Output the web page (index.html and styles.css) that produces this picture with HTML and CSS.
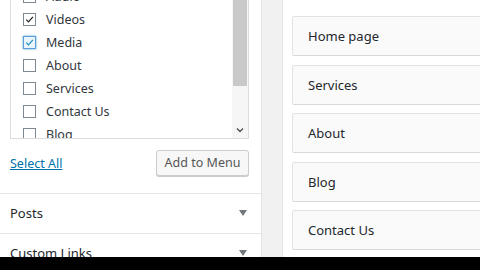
FILE: index.html
```html
<!DOCTYPE html>
<html lang="en">

<head>
    <meta charset="UTF-8">
    <meta name="viewport" content="width=device-width, initial-scale=1.0">
    <title>Menus</title>

    <link rel="stylesheet" href="styles.css">
</head>

<body>
    <div class="screen">
        <div class="sidePanel">
            <div class="listBox">
                <ul class="checkList">
                    <li><span class="box checked"><svg viewBox="0 0 12 12"><path d="M2.5 6.2l2.4 2.4 4.8-5.4" /></svg></span>Audio</li>
                    <li><span class="box checked"><svg viewBox="0 0 12 12"><path d="M2.5 6.2l2.4 2.4 4.8-5.4" /></svg></span>Videos</li>
                    <li><span class="box checked focus"><svg viewBox="0 0 12 12"><path d="M2.5 6.2l2.4 2.4 4.8-5.4" /></svg></span>Media</li>
                    <li><span class="box"></span>About</li>
                    <li><span class="box"></span>Services</li>
                    <li><span class="box"></span>Contact Us</li>
                    <li><span class="box"></span>Blog</li>
                </ul>
                <div class="scrollBar">
                    <div class="thumb"></div>
                    <div class="arrowDown"><svg viewBox="0 0 8 6"><path d="M1 1.5l3 3 3-3" /></svg></div>
                </div>
            </div>

            <div class="listActions">
                <a href="#" class="selectAll">Select All</a>
                <button class="addBtn">Add to Menu</button>
            </div>

            <div class="accordion">
                <div class="accTitle">Posts <span class="tri"></span></div>
                <div class="accTitle">Custom Links <span class="tri"></span></div>
            </div>
        </div>

        <div class="gutter"></div>

        <div class="menuPanel">
            <div class="menuItem">Home page</div>
            <div class="menuItem">Services</div>
            <div class="menuItem">About</div>
            <div class="menuItem">Blog</div>
            <div class="menuItem">Contact Us</div>
        </div>
    </div>

    <div class="blackBar"></div>
</body>

</html>
```

FILE: styles.css
```css
body {
    font-family: 'Noto Sans', 'Open Sans', sans-serif;
    background-color: #f1f1f1;
    color: #23282d;
    margin: 0;
    padding: 0;
    width: 480px;
    height: 270px;
    overflow: hidden;
}

.screen {
    display: flex;
    height: 257px;
    overflow: hidden;
}

.sidePanel {
    width: 262px;
    flex-shrink: 0;
    background-color: #fff;
    border-right: 1px solid #e5e5e5;
    box-sizing: border-box;
}

.listBox {
    display: flex;
    margin: 0 12px 0 10px;
    height: 139px;
    border: 1px solid #ddd;
    border-top: 0;
    box-sizing: border-box;
    overflow: hidden;
}

.checkList {
    list-style: none;
    margin: -15px 0 0 0;
    padding: 0 0 0 12px;
    flex: 1;
}

.checkList li {
    height: 23px;
    display: flex;
    align-items: center;
    font-size: 12.5px;
    color: #32373c;
}

.box {
    width: 11px;
    height: 11px;
    border: 1px solid #7e8993;
    margin-right: 10px;
    display: flex;
    align-items: center;
    justify-content: center;
    background: #fff;
}

.box svg {
    width: 11px;
    height: 11px;
    fill: none;
    stroke: #1e1e1e;
    stroke-width: 1.3;
}

.box.focus {
    border-color: #5b9dd9;
    box-shadow: 0 0 2px rgba(30, 140, 190, 0.8);
    background: #eaf4fb;
}

.box.focus svg {
    stroke: #1e8cbe;
}

.scrollBar {
    width: 16px;
    background-color: #f6f6f6;
    display: flex;
    flex-direction: column;
    justify-content: space-between;
}

.thumb {
    height: 86px;
    margin: 0 1px;
    background-color: #c9c9c9;
}

.arrowDown {
    height: 16px;
    display: flex;
    align-items: center;
    justify-content: center;
}

.arrowDown svg {
    width: 8px;
    height: 6px;
    fill: none;
    stroke: #505050;
    stroke-width: 1.4;
}

.listActions {
    display: flex;
    justify-content: space-between;
    align-items: center;
    margin: 10px 12px 0 10px;
    height: 27px;
}

.selectAll {
    color: #0073aa;
    font-size: 12.5px;
    text-decoration: underline;
    padding-top: 2px;
}

.addBtn {
    font-family: inherit;
    font-size: 12.5px;
    color: #555;
    background-color: #f7f7f7;
    border: 1px solid #ccc;
    border-radius: 3px;
    box-shadow: 0 1px 0 #ccc;
    height: 26px;
    width: 93px;
    padding: 0;
}

.accordion {
    margin-top: 17px;
    border-top: 1px solid #e5e5e5;
}

.accTitle {
    height: 40px;
    box-sizing: border-box;
    display: flex;
    align-items: center;
    justify-content: space-between;
    padding: 0 14px 2px 10px;
    font-size: 13px;
    color: #23282d;
    border-bottom: 1px solid #e5e5e5;
}

.tri {
    width: 0;
    height: 0;
    border-left: 4px solid transparent;
    border-right: 4px solid transparent;
    border-top: 6px solid #72777c;
}

.gutter {
    width: 20px;
    flex-shrink: 0;
}

.menuPanel {
    flex: 1;
    background-color: #fff;
    border-left: 1px solid #e5e5e5;
    padding: 16px 0 0 9px;
    display: flex;
    flex-direction: column;
    gap: 8.5px;
    overflow: hidden;
}

.menuItem {
    width: 260px;
    height: 40px;
    flex-shrink: 0;
    box-sizing: border-box;
    display: flex;
    align-items: center;
    padding-left: 15px;
    font-size: 13px;
    color: #23282d;
    background-color: #fafafa;
    border: 1px solid #e2e2e2;
    border-bottom-color: #d9d9d9;
    border-radius: 2px;
}

.blackBar {
    height: 13px;
    background-color: #000;
}
```
